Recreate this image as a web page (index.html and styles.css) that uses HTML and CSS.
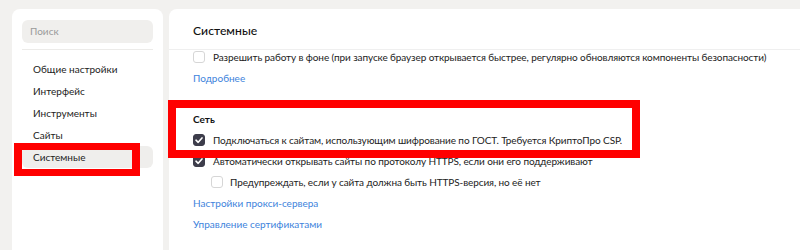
FILE: index.html
```html
<!DOCTYPE html>
<html lang="ru">
<head>
<meta charset="utf-8">
<link rel="stylesheet" href="styles.css">
</head>
<body>
<div class="page">
  <aside class="sidebar">
    <div class="search">Поиск</div>
    <div class="sep"></div>
    <nav class="menu">
      <div class="item">Общие настройки</div>
      <div class="item">Интерфейс</div>
      <div class="item">Инструменты</div>
      <div class="item">Сайты</div>
      <div class="item active">Системные</div>
    </nav>
  </aside>
  <main class="content">
    <div class="header"><h1 class="title">Системные</h1></div>
    <div class="list">
      <div class="row"><span class="cb"></span><span>Разрешить работу в фоне (при запуске браузер открывается быстрее, регулярно обновляются компоненты безопасности)</span></div>
      <div class="row"><a class="link">Подробнее</a></div>
      <div class="row section">Сеть</div>
      <div class="row"><span class="cb on"><svg viewBox="0 0 12 12" width="12" height="12"><path d="M3 6.2 L5.2 8.3 L9 3.9" fill="none" stroke="#fff" stroke-width="1.6" stroke-linecap="round" stroke-linejoin="round"/></svg></span><span>Подключаться к сайтам, использующим шифрование по ГОСТ. Требуется КриптоПро CSP.</span></div>
      <div class="row"><span class="cb on"><svg viewBox="0 0 12 12" width="12" height="12"><path d="M3 6.2 L5.2 8.3 L9 3.9" fill="none" stroke="#fff" stroke-width="1.6" stroke-linecap="round" stroke-linejoin="round"/></svg></span><span>Автоматически открывать сайты по протоколу HTTPS, если они его поддерживают</span></div>
      <div class="row sub"><span class="cb"></span><span>Предупреждать, если у сайта должна быть HTTPS-версия, но её нет</span></div>
      <div class="row"><a class="link">Настройки прокси-сервера</a></div>
      <div class="row"><a class="link">Управление сертификатами</a></div>
    </div>
  </main>
</div>
<div class="mark mark-left"></div>
<div class="mark mark-right"></div>
</body>
</html>
```
FILE: styles.css
```css
html, body {
  margin: 0;
  padding: 0;
  background: #f2f1ef;
  overflow: hidden;
  height: 250px;
}
body {
  font-family: Lato, "Noto Sans", sans-serif;
  font-size: 10px;
  color: #222;
}
.page {
  display: flex;
  gap: 6px;
  padding: 9px 0 0 12px;
  height: 260px;
  box-sizing: border-box;
}
.sidebar {
  width: 151px;
  flex: none;
  background: #fff;
  border-radius: 8px 8px 0 0;
  padding: 11px 10px 0 10px;
  box-sizing: border-box;
}
.search {
  height: 23px;
  line-height: 23px;
  border-radius: 6px;
  background: #f0efed;
  color: #9a9a9a;
  padding-left: 8px;
  font-size: 10px;
}
.sep {
  height: 1px;
  background: #ecebe9;
  margin-top: 6px;
}
.menu {
  margin-top: 8px;
  display: flex;
  flex-direction: column;
}
.item {
  height: 22px;
  line-height: 22px;
  padding-left: 11px;
  border-radius: 6px;
  font-size: 10px;
}
.item.active {
  background: #efeeec;
}
.content {
  flex: 1;
  background: #fff;
  border-radius: 8px 0 0 0;
  padding: 12px 0 0 0;
}
.header {
  padding-left: 24px;
  height: 28px;
  border-bottom: 1px solid #efefef;
}
.title {
  margin: 0;
  font-size: 12.2px;
  font-weight: 500;
  line-height: 20px;
  color: #111;
}
.list {
  margin-top: -4px;
  padding-left: 24px;
  letter-spacing: -0.1px;
}
.row {
  height: 21px;
  display: flex;
  align-items: center;
  gap: 8px;
  white-space: nowrap;
}
.row.section {
  margin-top: 20px;
  font-weight: 700;
  color: #111;
  letter-spacing: 0;
}
.row.sub {
  padding-left: 18px;
  gap: 7px;
}
.link {
  color: #3d83dc;
  cursor: pointer;
  letter-spacing: 0;
}
.cb {
  width: 12px;
  height: 12px;
  flex: none;
  box-sizing: border-box;
  border: 1px solid #d6d6d6;
  border-radius: 3px;
  background: #fff;
  display: flex;
}
.cb.on {
  background: #3d3d4b;
  border-color: #3d3d4b;
}
.cb svg {
  margin: -1px;
}
.mark {
  position: absolute;
  border: solid #ff0000;
  box-sizing: border-box;
}
.mark-left {
  left: 14px;
  top: 143px;
  width: 126px;
  height: 33px;
  border-width: 7px 8px;
}
.mark-right {
  left: 168px;
  top: 100px;
  width: 472px;
  height: 58px;
  border-width: 8px;
}
```
